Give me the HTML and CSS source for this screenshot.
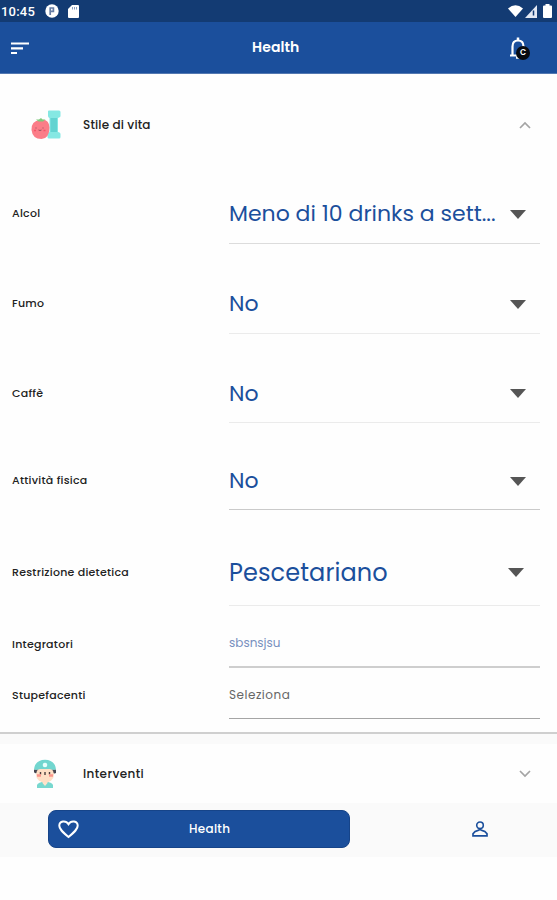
FILE: index.html
```html
<!DOCTYPE html>
<html lang="it">
<head>
    <meta charset="UTF-8">
    <title>Health</title>
    <link rel="stylesheet" href="styles.css">
</head>
<body>
    <div class="status-bar">
        <span class="clock">10:45</span>
        <svg class="status-app" width="14" height="14" viewBox="0 0 14 14">
            <circle cx="7" cy="7" r="6.7" fill="#fff"/>
            <path d="M5.200 11V4h3.200v3.400H6" fill="none" stroke="#667da5" stroke-width="1.700"/>
        </svg>
        <svg class="status-card" width="11" height="13" viewBox="0 0 11 13">
            <path d="M4 0h6q1 0 1 1v11q0 1-1 1H1q-1 0-1-1V4z" fill="#fff"/>
            <path d="M4.500 2v2.500M6.500 2v2.500M8.500 2v2.500" stroke="#8ca0c2" stroke-width="1"/>
        </svg>
        <div class="status-right">
            <svg width="15" height="12" viewBox="0 0 15 12"><path d="M0 3.500Q7.500-3 15 3.500L7.500 12z" fill="#fff"/></svg>
            <svg width="13" height="13" viewBox="0 0 13 13">
                <path d="M0 13 12 0v13z" fill="#e3e9f4"/>
                <path d="M8.500 5.500v5" stroke="#133b73" stroke-width="1.500"/>
            </svg>
            <svg class="battery" width="9" height="14" viewBox="0 0 9 14"><path d="M2.500 0h4v1.500H8q1 0 1 1V13q0 1-1 1H1q-1 0-1-1V2.500q0-1 1-1h1.500z" fill="#fff"/></svg>
        </div>
    </div>

    <header class="app-bar">
        <svg class="menu" width="20" height="13" viewBox="0 0 20 13"><path d="M1 1.500h18M1 6.300h12M1 11h6" stroke="#fff" stroke-width="2.200"/></svg>
        <h1>Health</h1>
        <div class="bell">
            <svg width="18" height="22" viewBox="0 0 18 22">
                <path d="M1 18.500h16M3.500 18V9.500Q3.500 3.500 9 3.500t5.500 6V18" fill="none" stroke="#fff" stroke-width="2.200"/>
                <path d="M9 .5v3M7 20.500h4" stroke="#fff" stroke-width="2.500"/>
            </svg>
            <span class="badge">C</span>
        </div>
    </header>

    <main>
        <div class="panel-header">
            <svg class="panel-icon" width="30" height="30" viewBox="0 0 30 30">
                <path d="M17 1.500Q17 .5 18 .5h10q1.500 0 1.500 1.500v4q0 1-1.500 1.500l-1 .5v14l1.500.5q1 .5 1 1.500v3q0 1.500-1.500 1.500H18q-1.500 0-1.500-1.500v-3q0-1 2-2V8q-1.500-.5-1.500-2z" fill="#85e8e3"/>
                <path d="M19.500 8h6.500v14h-6.500z" fill="#63d3d1"/>
                <path d="M9 10q9-2 9.500 7.500 0 11-8 11.500-9 0-10-9-.5-9 8.500-10z" fill="#fb7d88"/>
                <path d="M5 9.500h3l2-1.500 1.500 1.500h3l-2.500 2H7.500z" fill="#7fca7d"/>
                <path d="M5 17.500v1M12 17.500v1M7.500 20q1.500 1 3 0" fill="none" stroke="#93505c"/>
                <path d="M3 20.500h2M12.500 20.500h2" stroke="#f45369" stroke-width="1.500"/>
            </svg>
            <h2>Stile di vita</h2>
            <svg class="chevron" width="12" height="8" viewBox="0 0 12 8"><path d="M1 7l5-5 5 5" fill="none" stroke="#a4a4a4" stroke-width="1.700"/></svg>
        </div>

        <div class="fields">
            <div class="row">
                <label>Alcol</label>
                <div class="select"><span>Meno di 10 drinks a sett...</span><i class="arrow"></i></div>
            </div>
            <div class="row">
                <label>Fumo</label>
                <div class="select faint"><span>No</span><i class="arrow"></i></div>
            </div>
            <div class="row coffee">
                <label>Caffè</label>
                <div class="select faint"><span>No</span><i class="arrow"></i></div>
            </div>
            <div class="row activity">
                <label>Attività fisica</label>
                <div class="select dark"><span>No</span><i class="arrow"></i></div>
            </div>
            <div class="row diet">
                <label>Restrizione dietetica</label>
                <div class="select faint"><span>Pescetariano</span><i class="arrow"></i></div>
            </div>
            <div class="row supplements">
                <label>Integratori</label>
                <div class="input filled">sbsnsjsu</div>
            </div>
            <div class="row drugs">
                <label>Stupefacenti</label>
                <div class="input">Seleziona</div>
            </div>
        </div>

        <div class="divider"></div>

        <div class="panel-header collapsed">
            <svg class="panel-icon" width="30" height="30" viewBox="0 0 30 30">
                <path d="M7 29v-3q1-3 8-3.500 7 .5 8 3.500v3z" fill="#78d8cf"/>
                <path d="M12.500 21h5v3L15 27l-2.500-3z" fill="#ffe4cc"/>
                <path d="M4 10.500h22V14q-3 1-3 0H7q-2 1-3-1z" fill="#454650"/>
                <ellipse cx="15" cy="15.500" rx="9" ry="8" fill="#ffdfc5"/>
                <path d="M4 10.500Q5 1 15 .7q10 .3 11 9.800-5 .5-6-.5H10q-2 1-6 .5z" fill="#72d6cf"/>
                <circle cx="15" cy="6" r="2.300" fill="#e9fffc"/>
                <path d="M10.500 13v2.500M15 13v3M19.500 13v2.500" stroke="#4c3e3c" stroke-width="1.400"/>
                <path d="M7 16.500h4M19 16.500h4" stroke="#fb958b" stroke-width="2.500"/>
            </svg>
            <h2>Interventi</h2>
            <svg class="chevron" width="12" height="8" viewBox="0 0 12 8"><path d="M1 1l5 5 5-5" fill="none" stroke="#a4a4a4" stroke-width="1.700"/></svg>
        </div>
    </main>

    <nav class="bottom-nav">
        <div class="nav-active">
            <svg width="21" height="19" viewBox="0 0 21 19"><path d="M10.500 17C4 11.500 1.300 9 1.300 5.800c0-5 6.500-6 9.200-1.600 2.700-4.400 9.200-3.400 9.200 1.600 0 3.200-2.700 5.700-9.200 11.200z" fill="none" stroke="#fff" stroke-width="2"/></svg>
            <span>Health</span>
        </div>
        <svg class="person" width="16" height="16" viewBox="0 0 16 16">
            <circle cx="8" cy="4.300" r="3.300" fill="none" stroke="#1b4f9c" stroke-width="1.600"/>
            <path d="M1 14.900v-2.200Q3 10 5.500 9.700L8 8.500l2.500 1.200Q13 10 15 12.700v2.200z" fill="none" stroke="#1b4f9c" stroke-width="1.700"/>
        </svg>
    </nav>
</body>
</html>
```
FILE: styles.css
```css
* {
    margin: 0;
    padding: 0;
    box-sizing: border-box;
}

body {
    height: 900px;
    overflow: hidden;
    background-color: #fefefe;
    color: #222;
    font-family: Poppins, Inter, sans-serif;
}

svg {
    display: block;
    flex: none;
}

.status-bar {
    display: flex;
    align-items: center;
    height: 22px;
    padding: 0 5px 0 1px;
    background-color: #133b73;
    color: #fff;
}

.clock {
    width: 44px;
    font-family: Roboto, sans-serif;
    font-size: 13px;
    font-weight: 500;
    letter-spacing: 0.2px;
}

.status-card {
    margin-left: 9px;
}

.status-right {
    display: flex;
    align-items: center;
    gap: 2px;
    margin-left: auto;
}

.battery {
    margin-left: 3px;
}

.app-bar {
    display: flex;
    align-items: center;
    height: 52px;
    padding: 0 30px 0 10px;
    background-color: #1b4f9c;
    border-bottom: 1px solid #5378b1;
    color: #fff;
}

.menu {
    margin-top: 2px;
}

.app-bar h1 {
    margin-left: 222px;
    font-size: 14px;
    font-weight: 600;
    letter-spacing: 0.1px;
}

.bell {
    position: relative;
    margin-left: auto;
}

.badge {
    position: absolute;
    left: 7px;
    top: 9px;
    width: 14px;
    height: 14px;
    border-radius: 50%;
    background-color: #080b10;
    font-size: 8px;
    font-weight: 600;
    line-height: 14px;
    text-align: center;
}

.panel-header {
    display: flex;
    align-items: center;
    height: 101px;
    padding: 0 26px 0 31px;
}

.panel-header h2 {
    margin-left: 22px;
    font-size: 12px;
    font-weight: 500;
    letter-spacing: 0.15px;
}

.chevron {
    margin-left: auto;
}

.fields {
    height: 557px;
    padding: 8px 17px 0 12px;
}

.row {
    display: flex;
    align-items: center;
    height: 61px;
    margin-bottom: 29px;
}

.row label {
    width: 217px;
    font-size: 11px;
    font-weight: 500;
    letter-spacing: 0.25px;
}

.select {
    display: flex;
    align-items: center;
    justify-content: space-between;
    flex: 1;
    height: 100%;
    padding: 1px 14px 0 0;
    border-bottom: 1px solid #dcdcdc;
    color: #1b4f9c;
    font-size: 22px;
    white-space: nowrap;
}

.select.faint {
    border-color: #ebebeb;
}

.select.dark {
    border-color: #cacaca;
}

.arrow {
    margin-top: 1px;
    border: 8px solid transparent;
    border-top: 9px solid #555;
    border-bottom: 0;
}

.row.coffee {
    height: 60px;
    margin-bottom: 28px;
}

.row.activity {
    height: 59px;
    margin-bottom: 29px;
}

.row.diet {
    height: 67px;
    margin-bottom: 14px;
}

.row.diet .select {
    padding: 0 16px 0 0;
    font-size: 24px;
    letter-spacing: 0.1px;
}

.row.supplements {
    height: 48px;
    margin-bottom: 3px;
}

.row.drugs {
    height: 48px;
    margin-bottom: 0;
}

.input {
    display: flex;
    align-items: center;
    flex: 1;
    height: 100%;
    border-bottom: 1px solid #a5a5a5;
    color: #666;
    font-size: 12px;
    letter-spacing: 0.5px;
}

.input.filled {
    border-bottom: 2px solid #cecece;
    color: #7890be;
    letter-spacing: 0;
}

.divider {
    height: 12px;
    border-top: 2px solid #cfcfcf;
    background-color: #fafafa;
}

.panel-header.collapsed {
    height: 59px;
    padding-left: 30px;
}

.collapsed h2 {
    margin-left: 23px;
    letter-spacing: 0.4px;
}

.bottom-nav {
    display: flex;
    align-items: center;
    height: 54px;
    padding: 0 0 2px 48px;
    background-color: #fafafa;
}

.nav-active {
    display: flex;
    align-items: center;
    width: 302px;
    height: 38px;
    padding-left: 9px;
    border: 1px solid #164489;
    border-radius: 8px;
    background-color: #1b4f9c;
    color: #fff;
}

.nav-active span {
    margin-left: 110px;
    font-size: 12px;
    font-weight: 500;
    letter-spacing: 0.3px;
}

.person {
    margin-left: 122px;
}
```
